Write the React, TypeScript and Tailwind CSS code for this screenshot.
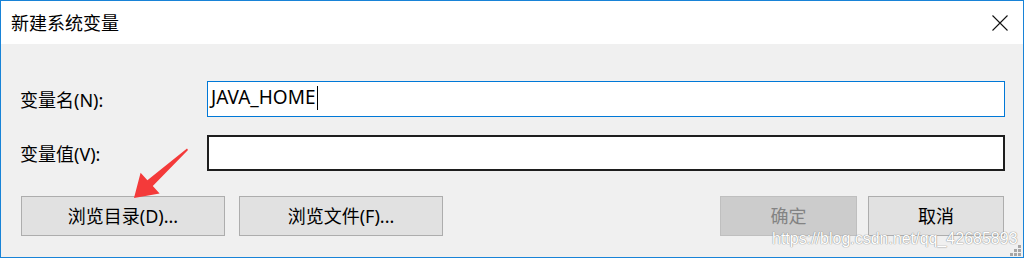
import React from "react";

const FONT = { fontFamily: '"Noto Sans", "Noto Sans CJK SC", sans-serif' };

export default function App() {
  return (
    <div className="w-[1025px] h-[259px] bg-white" style={FONT}>
      <div className="relative w-[1024px] h-[258px] border border-[#1883d7] flex flex-col text-black">
        {/* Title bar */}
        <div className="h-[43px] bg-white flex items-center justify-between pl-[10px] pr-[15px]">
          <span className="text-[18px] leading-none">新建系统变量</span>
          <svg width="16" height="16" viewBox="0 0 16 16" className="block">
            <path d="M0.5 0.5 L15.5 15.5 M15.5 0.5 L0.5 15.5" stroke="#111" strokeWidth="1.1" fill="none" />
          </svg>
        </div>
        {/* Body */}
        <div className="flex-1 bg-[#f0f0f0] pt-[37px] pl-[19px] pr-[18px]">
          <div className="flex items-center h-[36px]">
            <div className="w-[187px] text-[18px] leading-none pt-[1px]">变量名(N):</div>
            <div className="flex-1 h-[36px] bg-white border border-[#0078d7] flex items-center pl-[3px] pb-[4px]">
              <span className="text-[19px] leading-none">JAVA_HOME</span>
              <span className="inline-block w-[1px] h-[24px] bg-black ml-[1px] mt-[2px]" />
            </div>
          </div>
          <div className="flex items-center h-[36px] mt-[18px]">
            <div className="w-[187px] text-[18px] leading-none pt-[2px]">变量值(V):</div>
            <div className="flex-1 h-[36px] bg-white border-2 border-[#1e1e1e]" />
          </div>
          <div className="flex justify-between mt-[25px] pl-[1px] pr-[1px]">
            <div className="flex gap-[14px]">
              <button className="w-[204px] h-[40px] bg-[#e1e1e1] border border-[#adadad] text-[18px] leading-none flex items-center justify-center">
                浏览目录(D)...
              </button>
              <button className="w-[204px] h-[40px] bg-[#e1e1e1] border border-[#adadad] text-[18px] leading-none flex items-center justify-center">
                浏览文件(F)...
              </button>
            </div>
            <div className="flex gap-[11px]">
              <button className="w-[137px] h-[40px] bg-[#cccccc] border border-[#bfbfbf] text-[#838383] text-[18px] leading-none flex items-center justify-center">
                确定
              </button>
              <button className="w-[136px] h-[40px] bg-[#e1e1e1] border border-[#adadad] text-[18px] leading-none flex items-center justify-center">
                取消
              </button>
            </div>
          </div>
        </div>

        {/* Red annotation arrow */}
        <svg className="absolute left-[-1px] top-[-1px] pointer-events-none" width="260" height="259" viewBox="0 0 260 259">
          <polygon
            points="134,198 140.6,172.8 147.4,180.2 187,148.5 188,150 152.8,186 159.6,193.4"
            fill="#f43a3a"
          />
        </svg>

        {/* Watermark */}
        <div
          className="absolute left-[771px] top-[230px] text-[16px] leading-none text-white whitespace-nowrap [text-shadow:0_0_1px_#8a8a8a,0_0_1px_#8a8a8a]"
          style={{ fontFamily: '"Liberation Sans", Arial, sans-serif' }}
        >
          https://blog.csdn.net/qq_42685893
        </div>

        {/* Resize grip */}
        <svg className="absolute left-[1009px] top-[244px]" width="12" height="12" viewBox="0 0 12 12">
          <rect x="8" y="0" width="3" height="3" fill="#a6a6a6" />
          <rect x="4" y="4" width="3" height="3" fill="#a6a6a6" />
          <rect x="8" y="4" width="3" height="3" fill="#a6a6a6" />
          <rect x="0" y="8" width="3" height="3" fill="#a6a6a6" />
          <rect x="4" y="8" width="3" height="3" fill="#a6a6a6" />
          <rect x="8" y="8" width="3" height="3" fill="#a6a6a6" />
        </svg>
      </div>
    </div>
  );
}
